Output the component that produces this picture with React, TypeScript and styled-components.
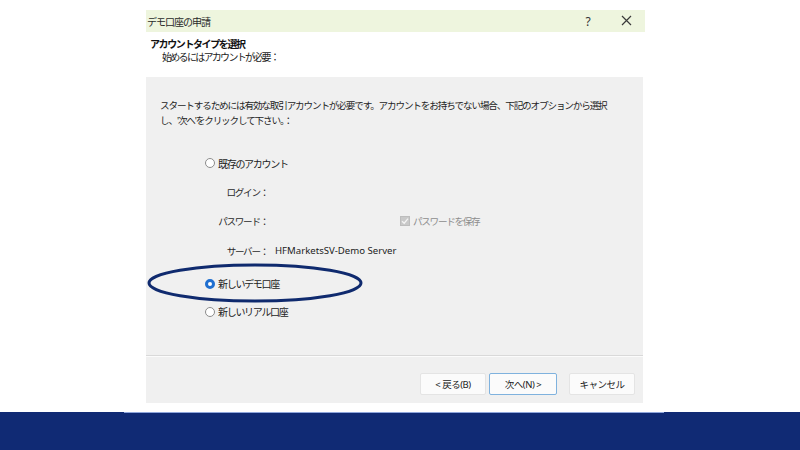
import React from 'react';
import styled, { createGlobalStyle } from 'styled-components';

const GlobalStyle = createGlobalStyle`
  html, body {
    margin: 0;
    padding: 0;
    background: #ffffff;
  }
  body {
    font-family: 'Noto Sans', 'Noto Sans CJK JP', sans-serif;
    color: #1c1c1c;
  }
`;

const Page = styled.div`
  width: 800px;
  height: 450px;
  display: flex;
  flex-direction: column;
  overflow: hidden;
`;

const Stage = styled.div`
  flex: 1;
  padding: 10px 0 0 146px;
`;

const Dialog = styled.div`
  position: relative;
  width: 499px;
  display: flex;
  flex-direction: column;
`;

const TitleBar = styled.div`
  height: 22px;
  background: #eef5de;
  display: flex;
  align-items: center;
  padding: 0 0 0 1px;
  font-size: 10px;
  letter-spacing: -1px;
  color: #2a2a2a;
`;

const TitleText = styled.span`
  flex: 1;
`;

const TitleButton = styled.span`
  width: 38px;
  text-align: center;
  font-size: 12px;
  color: #333;
  letter-spacing: 0;
`;

const Header = styled.div`
  height: 45px;
  background: #ffffff;
  display: flex;
  flex-direction: column;
  padding: 5px 0 0 4px;
  box-sizing: border-box;
`;

const HeaderTitle = styled.div`
  font-size: 10px;
  font-weight: 700;
  letter-spacing: -1.4px;
  line-height: 14px;
  color: #111;
`;

const HeaderSub = styled.div`
  font-size: 10px;
  letter-spacing: -1.7px;
  line-height: 13px;
  padding-left: 12px;
  color: #222;
`;

const Content = styled.div`
  height: 279px;
  width: 497px;
  background: #f0f0f0;
  box-sizing: border-box;
  padding: 21px 0 0 14px;
  border-bottom: 1px solid #d9d9d9;
`;

const Paragraph = styled.p`
  margin: 0;
  font-size: 9.6px;
  letter-spacing: -1.15px;
  line-height: 15px;
  color: #1e1e1e;
  width: 470px;
`;

const Options = styled.div`
  margin: 25px 0 0 45px;
  display: flex;
  flex-direction: column;
`;

const RadioRow = styled.div<{ $gap: number }>`
  display: flex;
  align-items: center;
  gap: 3px;
  height: 20px;
  margin-top: ${p => p.$gap}px;
  font-size: 10px;
  letter-spacing: -1.3px;
  color: #1c1c1c;
`;

const RadioDot = styled.span<{ $on?: boolean }>`
  width: 10px;
  height: 10px;
  box-sizing: border-box;
  border-radius: 50%;
  background: #ffffff;
  border: ${p => (p.$on ? '3px solid #1f6fd0' : '1px solid #8c8c8c')};
`;

const Fields = styled.div`
  display: grid;
  grid-template-columns: 63px 1fr;
  column-gap: 7px;
  grid-auto-rows: 29.5px;
  align-items: center;
  margin-top: 4px;
`;

const FieldLabel = styled.span`
  text-align: right;
  font-size: 9.6px;
  letter-spacing: -1.3px;
  color: #2a2a2a;
`;

const FieldValue = styled.span`
  display: flex;
  align-items: center;
  font-size: 9.6px;
  color: #1c1c1c;
`;

const SaveBox = styled.span`
  margin-left: 125px;
  display: flex;
  align-items: center;
  gap: 3px;
  color: #8d8d8d;
  letter-spacing: -1.3px;
`;

const CheckBox = styled.span`
  width: 10px;
  height: 10px;
  background: #c9c9c9;
  border: 1px solid #bdbdbd;
  box-sizing: border-box;
  display: flex;
  align-items: center;
  justify-content: center;
`;

const Footer = styled.div`
  height: 47px;
  width: 497px;
  background: #f0f0f0;
  border-top: 1px solid #fbfbfb;
  box-sizing: border-box;
  display: flex;
  justify-content: flex-end;
  align-items: flex-start;
  padding: 16px 8px 0 0;
`;

const Button = styled.button<{ $primary?: boolean; $space?: number }>`
  height: 22px;
  width: ${p => (p.$primary ? 68 : 66)}px;
  margin-left: ${p => p.$space ?? 0}px;
  background: #fbfbfb;
  border: 1px solid ${p => (p.$primary ? '#7fb2de' : '#e4e4e4')};
  border-radius: 2px;
  font-family: 'Noto Sans', 'Noto Sans CJK JP', sans-serif;
  font-size: 9.5px;
  letter-spacing: -0.5px;
  color: #222;
  padding: 0;
  cursor: pointer;
`;

const Highlight = styled.svg`
  position: absolute;
  left: 0;
  top: 252px;
  pointer-events: none;
`;

const Band = styled.div`
  position: relative;
  height: 38px;
  background: #102a74;
  &::before {
    content: '';
    position: absolute;
    left: 124px;
    width: 540px;
    top: 0;
    height: 1px;
    background: #8fa6dc;
  }
`;

const App: React.FC = () => {
  return (
    <Page>
      <GlobalStyle />
      <Stage>
        <Dialog>
          <TitleBar>
            <TitleText>デモ口座の申請</TitleText>
            <TitleButton>?</TitleButton>
            <TitleButton>
              <svg width="11" height="11" viewBox="0 0 11 11">
                <path d="M1 1 L10 10 M10 1 L1 10" stroke="#3a3a3a" strokeWidth="1.2" />
              </svg>
            </TitleButton>
          </TitleBar>
          <Header>
            <HeaderTitle>アカウントタイプを選択</HeaderTitle>
            <HeaderSub>始めるにはアカウントが必要：</HeaderSub>
          </Header>
          <Content>
            <Paragraph>
              スタートするためには有効な取引アカウントが必要です。アカウントをお持ちでない場合、下記のオプションから選択し、'次へ'をクリックして下さい。：
            </Paragraph>
            <Options>
              <RadioRow $gap={0}>
                <RadioDot />
                既存のアカウント
              </RadioRow>
              <Fields>
                <FieldLabel>ログイン：</FieldLabel>
                <FieldValue />
                <FieldLabel>パスワード：</FieldLabel>
                <FieldValue>
                  <SaveBox>
                    <CheckBox>
                      <svg width="8" height="8" viewBox="0 0 8 8">
                        <path d="M1 4.2 L3.2 6.2 L7 1.6" stroke="#f4f4f4" strokeWidth="1.3" fill="none" />
                      </svg>
                    </CheckBox>
                    パスワードを保存
                  </SaveBox>
                </FieldValue>
                <FieldLabel>サーバー：</FieldLabel>
                <FieldValue>HFMarketsSV-Demo Server</FieldValue>
              </Fields>
              <RadioRow $gap={8}>
                <RadioDot $on />
                新しいデモ口座
              </RadioRow>
              <RadioRow $gap={8}>
                <RadioDot />
                新しいリアル口座
              </RadioRow>
            </Options>
          </Content>
          <Footer>
            <Button>&lt; 戻る(B)</Button>
            <Button $primary $space={3}>次へ(N) &gt;</Button>
            <Button $space={12}>キャンセル</Button>
          </Footer>
          <Highlight width="222" height="44" viewBox="0 0 222 44">
            <ellipse cx="109" cy="21" rx="106" ry="18" fill="none" stroke="#0f2a6e" strokeWidth="3" />
          </Highlight>
        </Dialog>
      </Stage>
      <Band />
    </Page>
  );
};

export default App;
